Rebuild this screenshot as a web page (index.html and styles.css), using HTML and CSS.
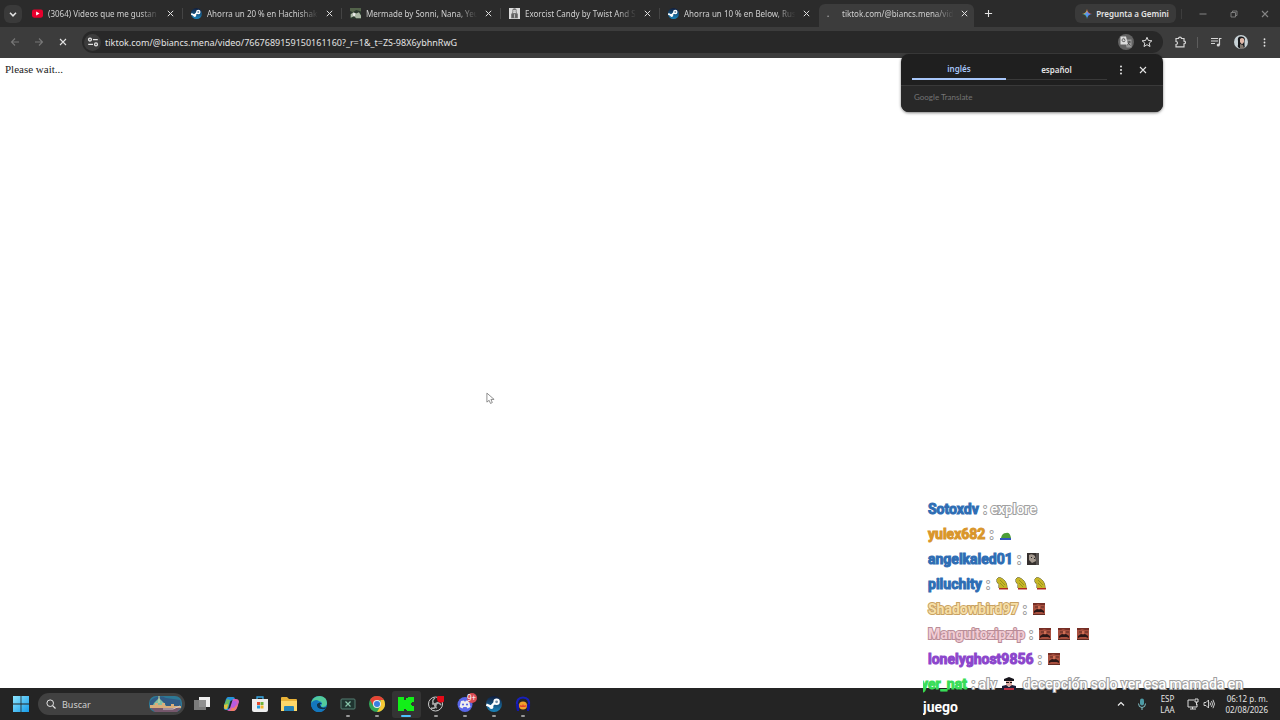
FILE: index.html
```html
<!DOCTYPE html>
<html lang="es">
<head>
    <meta charset="utf-8">
    <link rel="stylesheet" href="styles.css">
    <title>tiktok.com</title>
</head>
<body>
    <!-- shared drawings -->
    <svg class="defs" aria-hidden="true">
        <defs>
            <linearGradient id="steamFill" x1="0" y1="0" x2="0" y2="1">
                <stop offset="0" stop-color="#101c3c"/><stop offset="1" stop-color="#1b86bd"/>
            </linearGradient>
            <linearGradient id="winFill" x1="0" y1="0" x2="1" y2="1">
                <stop offset="0" stop-color="#8fe6ff"/><stop offset="1" stop-color="#159be8"/>
            </linearGradient>
        </defs>
        <symbol id="close" viewBox="0 0 10 10"><path d="M2 2l6 6M8 2L2 8" fill="none" stroke="currentColor" stroke-width="1.1"/></symbol>
        <symbol id="dots" viewBox="0 0 10 10"><g fill="currentColor"><circle cx="5" cy="1.4" r="1"/><circle cx="5" cy="5" r="1"/><circle cx="5" cy="8.6" r="1"/></g></symbol>
        <symbol id="steam" viewBox="0 0 16 16">
            <circle cx="8" cy="8" r="8" fill="url(#steamFill)"/>
            <path d="M0.3 8.5l4.6 2L8 7.5 10 6" fill="none" stroke="#fff" stroke-width="2.4"/>
            <circle cx="10.6" cy="5.8" r="3.2" fill="#fff"/><circle cx="10.6" cy="5.8" r="1.4" fill="#7390a8"/>
            <circle cx="5.4" cy="11" r="2.1" fill="#fff"/>
        </symbol>
        <symbol id="banana" viewBox="0 0 14 14">
            <path d="M2 2Q3 0 6 1Q12 4 12 11L4 11Q5 7 2 5Z" fill="#c6b526" stroke="#4d4a12"/>
            <path d="M5 3l5 5M5 6l4 4" stroke="#8d8a1c" stroke-width=".8"/>
            <path d="M4 11h9v1.500H4z" fill="#b02a20"/>
        </symbol>
        <symbol id="face" viewBox="0 0 14 14">
            <path d="M1 1h12v12H1z" fill="#a8503f"/>
            <path d="M1 1h12v2H9L6 2 4 3H1z" fill="#762f26"/>
            <path d="M3 4.500h3v1H3zM9 4.500h3v1H9z" fill="#5a2822"/>
            <path d="M6 4h2v3H6z" fill="#cf7055"/>
            <path d="M2 9l3-2 2 .5L9 7l3 2v2l-2-1H4l-2 1z" fill="#2c1717"/>
            <path d="M1 12h12v1H1z" fill="#632d25"/>
        </symbol>
    </svg>

    <header class="tabstrip">
        <button class="tab-search" aria-label="Buscar pestañas">
            <svg viewBox="0 0 10 10"><path d="M2.500 4L5 6.500 7.500 4" fill="none" stroke="#e3e3e3" stroke-width="1.300"/></svg>
        </button>
        <div class="tabs">
            <div class="tab">
                <svg class="favicon" viewBox="0 0 16 16"><rect y="2" width="16" height="12" rx="3" fill="#e8002d"/><path d="M6 5l5 3-5 3z" fill="#fff"/></svg>
                <span class="tab-title">(3064) Videos que me gustan -</span>
                <button class="tab-close" aria-label="Cerrar"><svg><use href="#close"/></svg></button>
            </div>
            <div class="tab">
                <svg class="favicon"><use href="#steam"/></svg>
                <span class="tab-title">Ahorra un 20 % en Hachishaku</span>
                <button class="tab-close" aria-label="Cerrar"><svg><use href="#close"/></svg></button>
            </div>
            <div class="tab">
                <svg class="favicon" viewBox="0 0 16 16"><path d="M0 0h16v16H0z" fill="#28362c"/><path d="M0 0h16v5L9 3 4 6 0 4z" fill="#53634a"/><path d="M1 9l4-3 4 2 4-2 3 5v4H9l-3-3-5 2z" fill="#a9b7a4"/><path d="M5 7l3 1-1 4-3-1z" fill="#eee"/></svg>
                <span class="tab-title">Mermade by Sonni, Nana, Yeup</span>
                <button class="tab-close" aria-label="Cerrar"><svg><use href="#close"/></svg></button>
            </div>
            <div class="tab">
                <svg class="favicon" viewBox="0 0 16 16"><path d="M0 0h16v16H0z" fill="#dcdcdc"/><path d="M5 2q3-3 6 0v4l2 3v6H3V9l2-3z" fill="#777"/><path d="M6 3h4v4H6z" fill="#eee"/><path d="M7 4v1M9 4v1M6 9v5M10 9v5" stroke="#222"/><path d="M7 9h2v5H7z" fill="#bbb"/></svg>
                <span class="tab-title">Exorcist Candy by Twist And Sc</span>
                <button class="tab-close" aria-label="Cerrar"><svg><use href="#close"/></svg></button>
            </div>
            <div class="tab">
                <svg class="favicon"><use href="#steam"/></svg>
                <span class="tab-title">Ahorra un 10 % en Below, Rust</span>
                <button class="tab-close" aria-label="Cerrar"><svg><use href="#close"/></svg></button>
            </div>
            <div class="tab active">
                <svg class="favicon" viewBox="0 0 16 16"><circle cx="3" cy="12" r="1" fill="#bbb"/></svg>
                <span class="tab-title">tiktok.com/@biancs.mena/vide</span>
                <button class="tab-close" aria-label="Cerrar"><svg><use href="#close"/></svg></button>
            </div>
        </div>
        <button class="new-tab" aria-label="Nueva pestaña">
            <svg viewBox="0 0 10 10"><path d="M5 1v8M1 5h8" stroke="#e3e3e3" stroke-width="1.200"/></svg>
        </button>
        <button class="gemini">
            <svg viewBox="0 0 16 16"><path d="M8 0Q9 7 16 8H8z" fill="#e9655b"/><path d="M16 8Q9 9 8 16V8z" fill="#4a86ee"/><path d="M8 16Q7 9 0 8h8z" fill="#43ad75"/><path d="M0 8Q7 7 8 0v8z" fill="#e5b53a"/><path d="M8 3q1 4 5 5q-4 1-5 5q-1-4-5-5q4-1 5-5" fill="#5b94f0"/></svg>
            Pregunta a Gemini
        </button>
        <div class="window-buttons">
            <button aria-label="Minimizar"><svg viewBox="0 0 10 10"><path d="M1.500 5h7" stroke="currentColor"/></svg></button>
            <button aria-label="Restaurar"><svg viewBox="0 0 10 10"><path d="M2 3.500h4.500V8H2zM3.500 3.500V2H8v4.500H6.500" fill="none" stroke="currentColor" stroke-width=".9"/></svg></button>
            <button aria-label="Cerrar ventana"><svg><use href="#close"/></svg></button>
        </div>
    </header>

    <nav class="toolbar">
        <button class="nav-btn off" aria-label="Atrás"><svg viewBox="0 0 10 10"><path d="M9 5H1.500M5 1.500L1.500 5 5 8.500" fill="none" stroke="currentColor" stroke-width="1.100"/></svg></button>
        <button class="nav-btn off" aria-label="Adelante"><svg viewBox="0 0 10 10"><path d="M1 5h7.500M5 1.500L8.500 5 5 8.500" fill="none" stroke="currentColor" stroke-width="1.100"/></svg></button>
        <button class="nav-btn" aria-label="Detener"><svg><use href="#close"/></svg></button>
        <div class="omnibox">
            <button class="site-info" aria-label="Información del sitio">
                <svg viewBox="0 0 10 10"><g fill="none" stroke="#e3e3e3" stroke-width="1.100"><circle cx="2.500" cy="3" r="1.200"/><path d="M5 3h4M1 7h4"/><circle cx="7.500" cy="7" r="1.200"/></g></svg>
            </button>
            <input type="text" class="url" aria-label="Dirección" value="tiktok.com/@biancs.mena/video/7667689159150161160?_r=1&amp;_t=ZS-98X6ybhnRwG">
            <button class="translate-btn" aria-label="Traducir">
                <svg viewBox="0 0 12 12"><path d="M5 3.500h6.500v8H6.500z" fill="#999"/><path d="M.5.5h5.500l2 8H.5z" fill="#ddd"/><path d="M5.200 3.600H3.700M5.200 4.300a1.600 1.600 0 1 1-.6-1.500M7.500 6h3.500M9.200 5v1q-.3 2-2 3M8 7l2.500 2.500" fill="none" stroke="#444" stroke-width=".8"/></svg>
            </button>
            <button class="star" aria-label="Favorito">
                <svg viewBox="0 0 12 12"><path d="M6 1.300l1.400 3.200 3.500.3-2.700 2.300.8 3.400-3-1.800-3 1.800.8-3.400L1.100 4.800l3.500-.3z" fill="none" stroke="#dedede"/></svg>
            </button>
        </div>
        <button class="ext" aria-label="Extensiones"><svg viewBox="0 0 12 12"><path d="M2 2.500h2.500a1.500 1.300 0 0 1 3 0H10V5.200a1.500 1.300 0 0 1 0 2.600v3H2V8.500a1.500 1.500 0 0 0 0-3z" fill="none" stroke="#d5d5d5" stroke-width="1.200"/></svg></button>
        <span class="divider"></span>
        <button class="media" aria-label="Multimedia"><svg viewBox="0 0 12 12"><path d="M1 2.500h7M1 5h7M1 7.500h4M9.500 9V2.500h2" fill="none" stroke="#d5d5d5" stroke-width="1.200"/><circle cx="8.300" cy="9" r="1.600" fill="#d5d5d5"/></svg></button>
        <button class="profile" aria-label="Perfil"><svg viewBox="0 0 14 14"><circle cx="7" cy="7" r="7" fill="#c8d2d6"/><path d="M4 10V6Q3 1 7.500 1.500T10.500 6v4q1 2-1 3.500H6Q3 12 4 10z" fill="#17191c"/><path d="M6 4q2-2 4 0v3q-1 2-2 2T6 7z" fill="#e2b8a8"/><path d="M6 9l3 1 1 3q-2 1-4 0z" fill="#84796f"/></svg></button>
        <button class="menu" aria-label="Menú"><svg><use href="#dots"/></svg></button>
    </nav>

    <main class="page">
        Please wait...
        <section class="translate">
            <div class="translate-head">
                <div class="langs">
                    <button class="lang selected">inglés</button>
                    <button class="lang">español</button>
                </div>
                <button class="translate-icon" aria-label="Opciones"><svg><use href="#dots"/></svg></button>
                <button class="translate-icon" aria-label="Cerrar"><svg><use href="#close"/></svg></button>
            </div>
            <div class="translate-foot">Google Translate</div>
        </section>
        <svg class="cursor" viewBox="0 0 10 14"><path d="M1 1v10l2.500-2 1.500 3.500 2-1L5.500 8H9z" fill="#fff" stroke="#777" stroke-width=".9"/></svg>
    </main>

    <footer class="taskbar">
        <button class="start" aria-label="Inicio"><svg viewBox="0 0 16 16"><path d="M0 0h7.600v7.600H0zM8.400 0H16v7.600H8.400zM0 8.400h7.600V16H0zM8.400 8.400H16V16H8.400z" fill="url(#winFill)"/></svg></button>
        <label class="search">
            <svg class="lens" viewBox="0 0 10 10"><circle cx="4.200" cy="4.200" r="3.300" fill="none" stroke="#e5e5e5"/><path d="M6.600 6.600L9.500 9.500" stroke="#e5e5e5" stroke-width="1.200"/></svg>
            <input type="text" placeholder="Buscar" aria-label="Buscar">
            <svg class="city" viewBox="0 0 33 16"><rect width="33" height="16" rx="7" fill="#2d7895"/><path d="M1 5Q9-2 17 2l14 2 1 6H1z" fill="#315b85"/><path d="M5 7l5-5 5 5 3 4H3z" fill="#7fbda3"/><path d="M10 0v7" stroke="#d7d7a0"/><path d="M1 9h5V7h3v2h4V7h3v3h6V8h3v2h7v2H1z" fill="#d9ad7b"/><path d="M2 12h30l-4 4H6z" fill="#76576c"/><path d="M14 13h10l7-3" stroke="#d0c8cd" fill="none"/></svg>
        </label>
        <div class="apps">
            <button class="app" aria-label="Vista de tareas"><svg viewBox="0 0 16 16"><path d="M5 1h11v10H5z" fill="#eee"/><path d="M0 4h12v10H0z" fill="#858585" fill-opacity=".9"/></svg></button>
            <button class="app" aria-label="Copilot"><svg viewBox="0 0 16 16"><path d="M5 1h5q2 0 2 3L9 12q-1 2-3 2H3q-3 0-2-4l2-7q1-2 2-2z" fill="#2591dc"/><path d="M1 9l3-6 3 1-2 8q-3 2-4-1z" fill="#69bd61"/><path d="M1 9l4-1-1 5q-3 1-3-2z" fill="#dfc13d"/><path d="M6 15h5q2 0 3-3l2-6q0-3-3-3h-3L7 11q-1 4-4 3z" fill="#d560b8"/><path d="M11 11l4-2-2 4-2 2H7l2-3z" fill="#ef8065"/><path d="M9 5h4l1 2-3 5-3-1z" fill="#b85be0"/><path d="M7.500 5l2-1-2.500 8-2 1z" fill="#242424"/></svg></button>
            <button class="app" aria-label="Tienda"><svg viewBox="0 0 16 16"><path d="M5 4V1h6v3" fill="none" stroke="#38a9e5" stroke-width="1.300"/><path d="M0 3h16v11q0 2-2 2H2q-2 0-2-2z" fill="#eee"/><path d="M5 6h3v3H5z" fill="#e44b2e"/><path d="M8.500 6h3v3h-3z" fill="#6fb43b"/><path d="M5 9.500h3v3H5z" fill="#209ddf"/><path d="M8.500 9.500h3v3h-3z" fill="#f2b529"/></svg></button>
            <button class="app" aria-label="Explorador"><svg viewBox="0 0 16 16"><path d="M0 2q0-1 1-1h5l2 2h7q1 0 1 1v11H0z" fill="#eab338"/><path d="M0 5h16v10H0z" fill="#ffd869"/><path d="M3 15v-4q0-1 1-1h8q1 0 1 1v4z" fill="#2784b7"/></svg></button>
            <button class="app" aria-label="Edge"><svg viewBox="0 0 16 16"><circle cx="8" cy="8" r="8" fill="#1683cf"/><path d="M0 7Q2 0 9 0q7 1 7 7 0 4-5 4-2-1 0-3 0-3-4-3-4 0-7 2z" fill="#53cb9b"/><path d="M0 7q4-5 8-2-3 2-2 5 1 4 7 4-3 3-7 2Q0 14 0 7z" fill="#1477bd"/><path d="M6 8q-1 6 8 5l1-2q-5 2-6-2 0-2 2-1Q9 5 6 8z" fill="#10334b"/></svg></button>
            <button class="app open" aria-label="Terminal"><svg viewBox="0 0 16 16"><rect x="1" y="3" width="14" height="10" rx="1" fill="#1f3430" stroke="#557e73"/><path d="M5.500 5.500l5 5M10.500 5.500l-5 5" stroke="#88c4aa" stroke-width="1.200"/></svg></button>
            <button class="app open" aria-label="Chrome"><svg viewBox="0 0 16 16"><circle cx="8" cy="8" r="8" fill="#32a657"/><path d="M1 4Q3 0 8 0t7 4H8L4.500 10z" fill="#e64435"/><path d="M8 16l3.500-6V4H15q3 7-3 11-2 1-4 1z" fill="#f8c934"/><circle cx="8" cy="8" r="4" fill="#eee"/><circle cx="8" cy="8" r="3" fill="#397fe1"/></svg></button>
            <button class="app open current" aria-label="Kick"><svg viewBox="0 0 16 16"><path d="M0 1h6v3h2V2h2V1h6v5h-2v1h-1v2h1v1h2v5H9v-1H8v-1H6v2H0z" fill="#12ef18"/></svg></button>
            <button class="app open" aria-label="OBS"><svg viewBox="0 0 16 16"><circle cx="7.500" cy="8" r="7" fill="#222" stroke="#ccc"/><path d="M7 2q-4 3-1 6 3 1 4-2M13 9q-3-4-6-1-1 3 2 4M3 12q5 1 5-3-1-2-4-1" fill="none" stroke="#aaa" stroke-width="1.500"/><circle cx="13" cy="2.500" r="4" fill="#e60a18"/></svg></button>
            <button class="app open" aria-label="Discord"><svg viewBox="0 0 16 16"><circle cx="8" cy="8.500" r="7.500" fill="#5967e9"/><path d="M4 5l3-.5.5 1h1l.5-1 3 .5 1.500 6-3 1.500-1-1.500h-3l-1 1.500-3-1.500z" fill="#eee"/><circle cx="6" cy="8.500" r="1.100" fill="#5967e9"/><circle cx="10" cy="8.500" r="1.100" fill="#5967e9"/></svg><span class="badge">9+</span></button>
            <button class="app open" aria-label="Steam"><svg><use href="#steam"/></svg></button>
            <button class="app open" aria-label="Audacity"><svg viewBox="0 0 16 16"><path d="M2 10Q1 1.500 8 1.500T14 10" fill="none" stroke="#1820ba" stroke-width="2.200"/><path d="M1 8h3v7H2q-1-3-1-7zM15 8h-3v7h2q1-3 1-7z" fill="#1317a5"/><ellipse cx="8" cy="9.500" rx="4" ry="4" fill="#f1a02b"/><path d="M4 10l2-1 1 1 1-2 1 2 1-1 2 1-2 1H6z" fill="#e13f2c"/></svg></button>
        </div>
        <div class="tray">
            <button class="tray-up" aria-label="Iconos ocultos"><svg viewBox="0 0 10 10"><path d="M2 6.500l3-3 3 3" fill="none" stroke="#eee" stroke-width="1.200"/></svg></button>
            <button class="tray-mic" aria-label="Micrófono"><svg viewBox="0 0 12 12"><rect x="4" y="0.500" width="4" height="7" rx="2" fill="#4d9ba6"/><path d="M2.500 5.500q0 4 3.500 4t3.500-4M6 9.500V12" fill="none" stroke="#83c2c8"/></svg></button>
            <button class="tray-lang">ESP<br>LAA</button>
            <button class="tray-net" aria-label="Red y volumen">
                <svg viewBox="0 0 12 12"><path d="M7 2H1v7h9V6M3 11h6M5.500 9v2" fill="none" stroke="#ddd"/><path d="M8 1h3v3H8zM9.500 4v3" fill="none" stroke="#ddd"/></svg>
                <svg viewBox="0 0 12 12"><path d="M1 4.500h2L5.500 2v8L3 7.500H1zM7 4.500q1 1.500 0 3M8.500 3q2 3 0 6M10 1.800q3 4.200 0 8.400" fill="none" stroke="#ddd" stroke-width=".9"/></svg>
            </button>
            <button class="tray-clock">06:12 p. m.<br>02/08/2026</button>
        </div>
    </footer>

    <aside class="chat">
        <p><b class="blue">Sotoxdv</b> : explore</p>
        <p><b class="orange">yulex682</b> : <svg viewBox="0 0 14 14"><path d="M2 11q1-5 5-5 4-1 5 5z" fill="#4b9d37"/><path d="M1 11h11v2H1z" fill="#3157bd"/></svg></p>
        <p><b class="blue">angelkaled01</b> : <svg viewBox="0 0 14 14"><path d="M1 1h12v12H1z" fill="#35302e"/><path d="M3 3q3-2 6 1l1 5-4 2-3-3z" fill="#a59a90"/><path d="M5 5h1v1H5zM8 6h1v1H8z" fill="#222"/><path d="M10 1h3v12h-3z" fill="#575250"/></svg></p>
        <p><b class="blue">piluchity</b> : <svg><use href="#banana"/></svg><svg><use href="#banana"/></svg><svg><use href="#banana"/></svg></p>
        <p><b class="sand">Shadowbird97</b> : <svg><use href="#face"/></svg></p>
        <p><b class="pink">Manguitozipzip</b> : <svg><use href="#face"/></svg><svg><use href="#face"/></svg><svg><use href="#face"/></svg></p>
        <p><b class="purple">lonelyghost9856</b> : <svg><use href="#face"/></svg></p>
        <p class="last"><b class="green">yer_nat</b> : alv <svg viewBox="0 0 14 14"><path d="M2 2l5-2 5 2v2H2z" fill="#17151c"/><path d="M4 4h6v5H4z" fill="#d9a9a0"/><path d="M4 5h3v1H4zM8 5h2v1H8z" fill="#111"/><path d="M0 9l4-1 3 2 3-2 4 1v4H0z" fill="#1b1c37"/><path d="M2 11h10v2H2z" fill="#bd3043"/></svg> decepción solo ver esa mamada en</p>
        <p class="cont">juego</p>
    </aside>
</body>
</html>
```
FILE: styles.css
```css
* {
    box-sizing: border-box;
}
body {
    margin: 0;
    height: 100vh;
    display: flex;
    flex-direction: column;
    overflow: hidden;
    background-color: white;
    font-family: "Noto Sans", "Open Sans", sans-serif;
    font-size: 8px;
    color: #e3e3e3;
}
button {
    display: flex;
    align-items: center;
    justify-content: center;
    flex: none;
    margin: 0;
    padding: 0;
    border: 0;
    background: none;
    color: inherit;
    font: inherit;
}
input {
    min-width: 0;
    padding: 0;
    border: 0;
    outline: 0;
    background: none;
    color: inherit;
    font: inherit;
}
svg {
    display: block;
    flex: none;
    width: 12px;
    height: 12px;
}
.defs {
    position: absolute;
    width: 0;
    height: 0;
}

/* tabs */
.tabstrip {
    display: flex;
    align-items: center;
    height: 27px;
    flex: none;
    padding-left: 4px;
    background-color: #2b2b2b;
}
.tab-search {
    width: 18px;
    height: 18px;
    border-radius: 6px;
    background-color: #3a3a3a;
}
.tabs {
    display: flex;
    flex: 0 1 954px;
    min-width: 0;
    height: 27px;
    padding-top: 4px;
    margin-left: 2px;
}
.tab {
    position: relative;
    display: flex;
    align-items: center;
    flex: 1 1 0;
    min-width: 0;
    height: 19px;
    padding: 0 7px 0 8px;
    color: #d0d0d0;
}
.tab::after {
    content: "";
    position: absolute;
    right: 0;
    top: 4px;
    width: 1px;
    height: 11px;
    background-color: #444;
}
.tab.active {
    height: 23px;
    margin-right: 4px;
    padding: 0 4px 4px 7px;
    border-radius: 6px 6px 0 0;
    background-color: #3c3c3c;
}
.tab:nth-last-child(-n+2)::after {
    display: none;
}
.favicon {
    width: 11px;
    height: 11px;
}
.tab-title {
    flex: 1;
    min-width: 0;
    margin: 0 1px 0 5px;
    overflow: hidden;
    white-space: nowrap;
    -webkit-mask-image: linear-gradient(to right, black 80%, transparent 97%);
    mask-image: linear-gradient(to right, black 80%, transparent 97%);
}
.tab-close {
    width: 12px;
    color: #e3e3e3;
}
.tab-close svg {
    width: 9px;
    height: 9px;
}
.new-tab {
    width: 20px;
    margin-right: auto;
}
.new-tab svg {
    width: 9px;
    height: 9px;
}
.gemini {
    gap: 4px;
    width: 101px;
    height: 19px;
    border-radius: 6px;
    background-color: #3a3a3a;
    font-weight: 600;
}
.gemini svg {
    width: 10px;
    height: 10px;
}
.window-buttons {
    display: flex;
    margin-left: 5px;
    padding-left: 5px;
    border-left: 1px solid #3d3d3d;
    color: #858585;
}
.window-buttons button {
    width: 31px;
}
.window-buttons svg {
    width: 10px;
    height: 10px;
}

/* toolbar */
.toolbar {
    display: flex;
    align-items: center;
    flex: none;
    height: 31px;
    padding: 0 7px 1px 3px;
    background-color: #3c3c3c;
}
.nav-btn {
    width: 24px;
}
.nav-btn svg {
    width: 10px;
    height: 10px;
}
.off {
    color: #777;
}
.omnibox {
    display: flex;
    align-items: center;
    flex: 1;
    height: 22px;
    margin-left: 7px;
    padding: 0 10px 0 2px;
    border-radius: 11px;
    background-color: #282828;
}
.site-info {
    width: 17px;
    height: 17px;
    border-radius: 50%;
    background-color: #3c3c3c;
}
.url {
    flex: 1;
    margin-left: 4px;
    font-size: 9px;
}
.translate-btn {
    width: 16px;
    height: 16px;
    margin-right: 7px;
    border-radius: 50%;
    background-color: #626262;
}
.ext {
    width: 34px;
}
.divider {
    width: 1px;
    height: 11px;
    background-color: #5d5d5d;
}
.media {
    width: 36px;
}
.profile svg {
    width: 14px;
    height: 14px;
}
.menu {
    width: 18px;
    margin-left: 7px;
}
.menu svg {
    width: 9px;
    height: 9px;
}

/* page */
.page {
    position: relative;
    flex: 1;
    padding: 5px;
    color: #222;
    font-family: "Liberation Serif", serif;
    font-size: 11px;
    line-height: 13px;
}
.translate {
    position: absolute;
    top: -4px;
    right: 117px;
    width: 262px;
    overflow: hidden;
    border-radius: 8px;
    background-color: #1f1f1f;
    box-shadow: 0 1px 3px rgba(0, 0, 0, 0.5);
    color: #e3e3e3;
    font-family: "Noto Sans", "Open Sans", sans-serif;
    font-size: 8px;
    font-weight: 600;
}
.translate-head {
    display: flex;
    align-items: center;
    height: 32px;
    padding: 0 9px 0 11px;
    border-bottom: 1px solid #393939;
}
.langs {
    display: flex;
    flex: 1;
    margin-right: 3px;
}
.lang {
    flex: 1;
    height: 21px;
    border-bottom: 1px solid #393939;
}
.selected {
    flex: 0 0 94px;
    border-bottom: 2px solid #a8c7fa;
    color: #a8c7fa;
}
.translate-icon {
    width: 22px;
}
.translate-icon svg {
    width: 10px;
    height: 10px;
}
.translate-foot {
    height: 26px;
    padding: 0 13px;
    background-color: #282828;
    color: #757575;
    font-family: Lato, sans-serif;
    font-weight: 400;
    line-height: 22px;
}
.cursor {
    position: absolute;
    left: 38%;
    top: 53%;
    width: 9px;
    height: 13px;
}

/* taskbar */
.taskbar {
    display: flex;
    align-items: center;
    flex: none;
    height: 32px;
    padding: 0 12px 0 13px;
    background-color: #242424;
}
.start svg {
    width: 16px;
    height: 16px;
}
.search {
    display: flex;
    align-items: center;
    width: 147px;
    height: 22px;
    margin-left: 9px;
    padding: 0 3px 0 8px;
    border-radius: 11px;
    background-color: #414141;
}
.lens {
    width: 10px;
    height: 10px;
}
.search input {
    flex: 1;
    margin-left: 6px;
    font-size: 9px;
}
.search input::placeholder {
    color: #cfcfcf;
}
.city {
    width: 33px;
    height: 16px;
}
.apps {
    display: grid;
    grid-template-columns: repeat(12, 1fr);
    width: 351px;
    margin-left: 2px;
}
.app {
    position: relative;
    height: 27px;
    border-radius: 3px;
}
.app svg {
    width: 16px;
    height: 16px;
}
.current {
    background-color: #343434;
}
.open::after {
    content: "";
    position: absolute;
    bottom: 1px;
    left: calc(50% - 2px);
    width: 4px;
    height: 2px;
    border-radius: 1px;
    background-color: #999;
}
.current::after {
    left: calc(50% - 5px);
    width: 10px;
    background-color: #4cc2ff;
}
.badge {
    position: absolute;
    top: 2px;
    right: 3px;
    width: 10px;
    height: 10px;
    border-radius: 50%;
    background-color: #d84a55;
    color: white;
    line-height: 10px;
}
.tray {
    display: flex;
    align-items: center;
    margin-left: auto;
    line-height: 11px;
}
.tray-up {
    width: 20px;
}
.tray-up svg {
    width: 10px;
    height: 10px;
}
.tray-mic {
    width: 22px;
}
.tray-lang {
    width: 29px;
}
.tray-net {
    gap: 4px;
    width: 30px;
    margin-left: 4px;
}
.tray-clock {
    justify-content: flex-end;
    width: 52px;
    text-align: right;
}

/* stream chat, over everything */
.chat {
    position: absolute;
    right: 0;
    bottom: 0;
    width: 357px;
    overflow: hidden;
    color: white;
    font-family: Roboto, sans-serif;
    font-size: 14px;
    font-weight: 500;
}
.chat p {
    display: flex;
    align-items: center;
    height: 25px;
    margin: 0;
    padding-left: 5px;
    white-space: pre;
    -webkit-text-stroke: 2px #a0a0a0;
    paint-order: stroke fill;
}
.chat b {
    margin-right: 1px;
    -webkit-text-stroke: 1px;
}
.chat svg {
    width: 14px;
    height: 14px;
    margin: 0 3px 0 2px;
}
.chat .last {
    padding-left: 0;
    margin-left: -2px;
}
.chat .cont {
    height: 24px;
    padding: 0 0 3px;
    -webkit-text-stroke: 0;
    font-weight: 700;
}
.blue {
    color: #2e6db4;
}
.orange {
    color: #d9962b;
}
.chat .sand {
    color: #f6dfa8;
    -webkit-text-stroke: 2px #c9a261;
}
.chat .pink {
    color: #f2cdd5;
    -webkit-text-stroke: 2px #b98c97;
}
.purple {
    color: #8c46cc;
}
.green {
    color: #38dd58;
}
```
